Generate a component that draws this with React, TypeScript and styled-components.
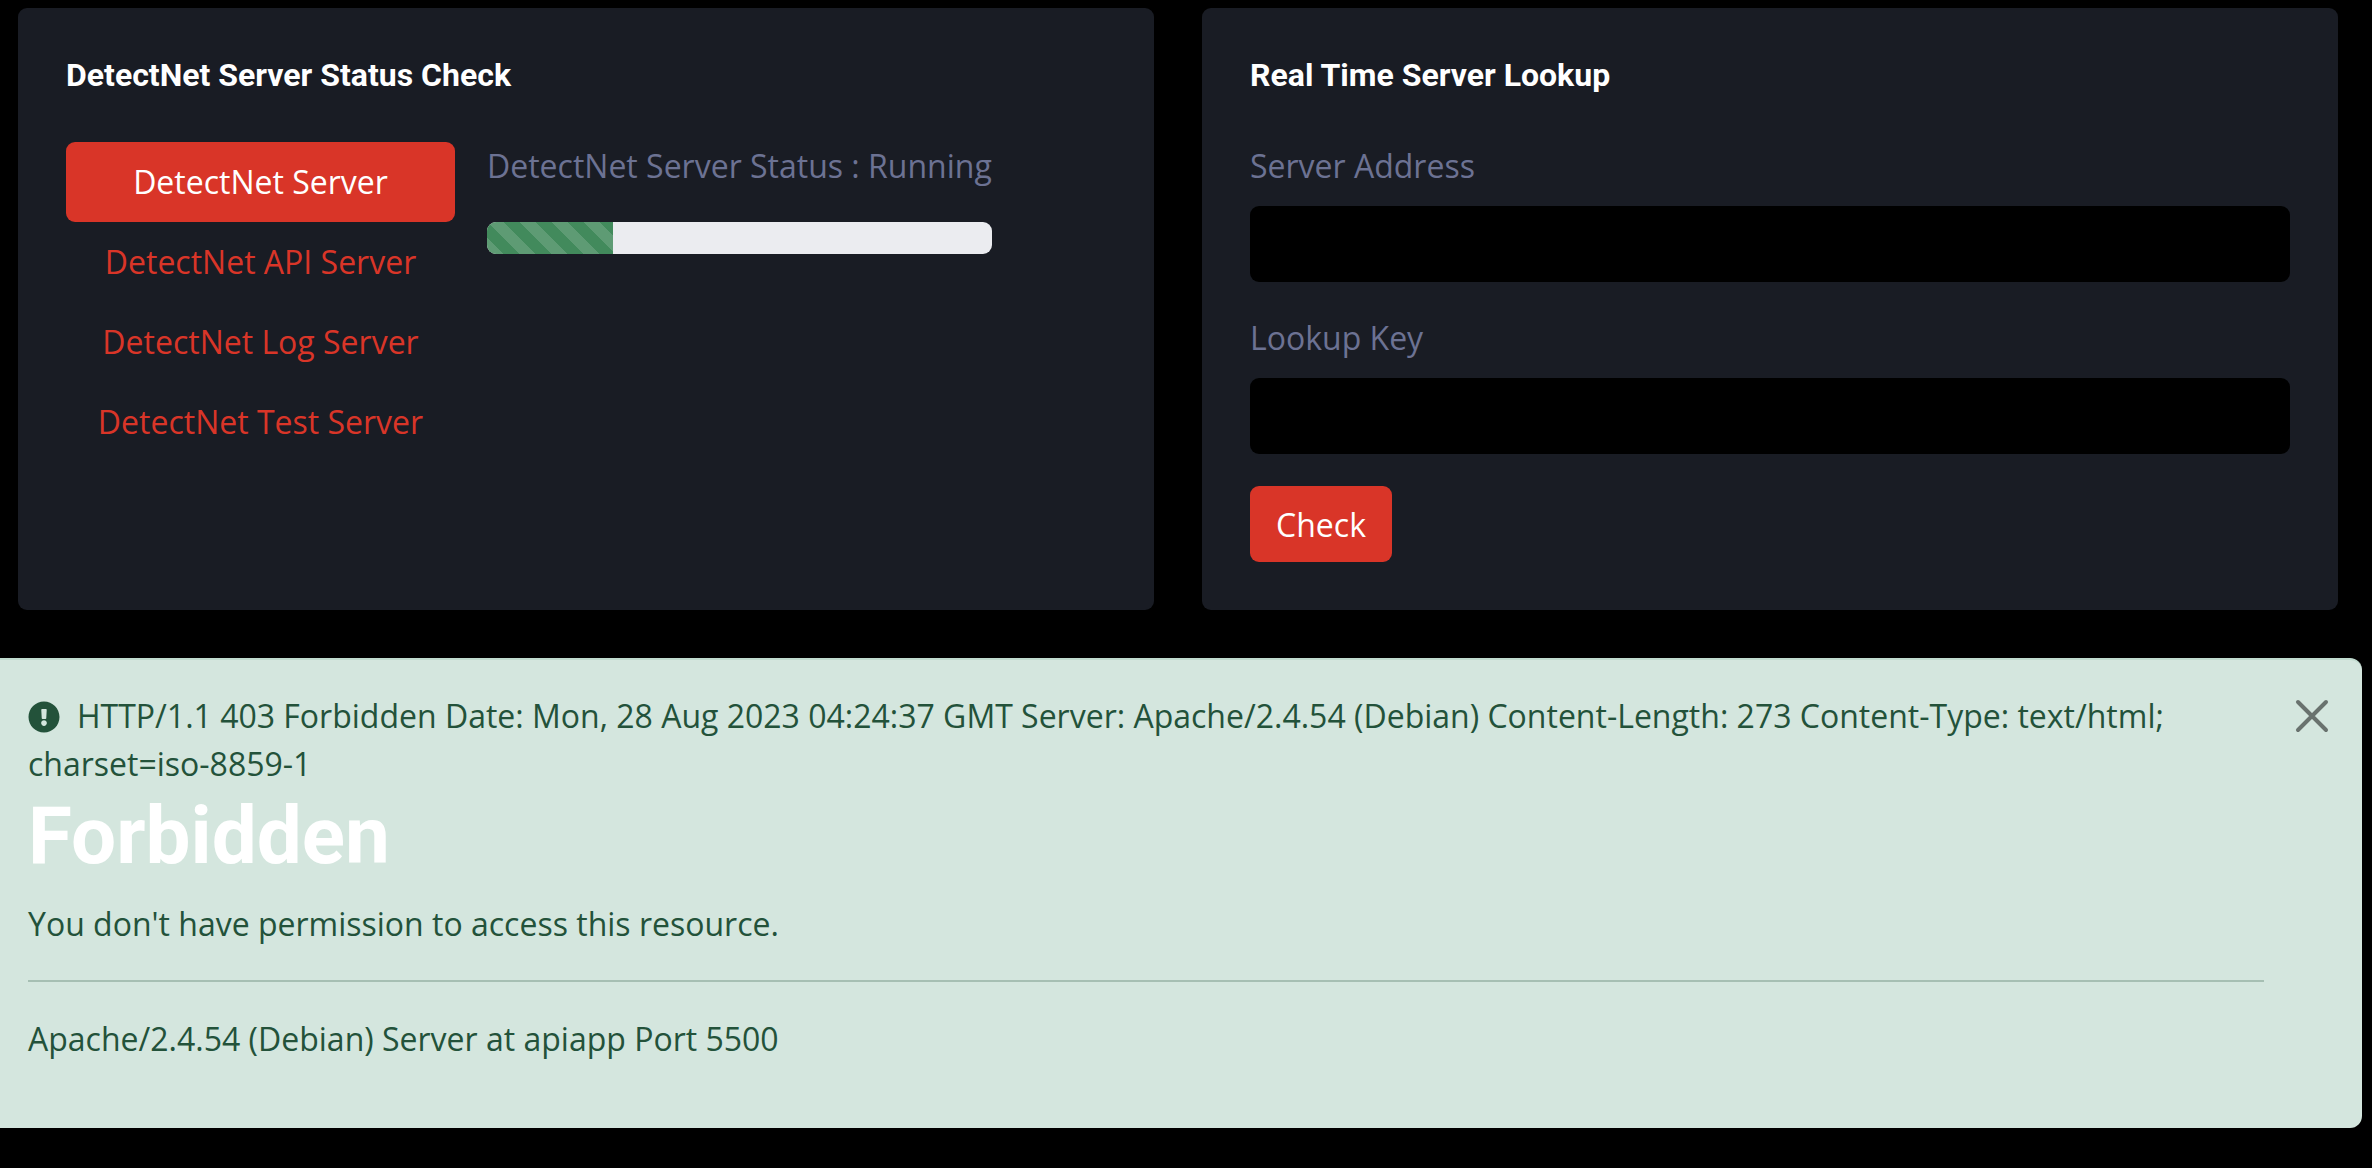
import React from "react";
import styled, { createGlobalStyle } from "styled-components";

const Global = createGlobalStyle`
  html, body { margin: 0; padding: 0; background: #000; }
  body { font-family: "Open Sans", "Liberation Sans", sans-serif; font-size: 32px; }
  * { box-sizing: border-box; }
`;

const Page = styled.div`
  width: 2372px;
  height: 1168px;
  background: #000;
  padding-top: 8px;
  overflow: hidden;
`;

const Cards = styled.div`
  display: grid;
  grid-template-columns: 1136px 1136px;
  gap: 48px;
  padding-left: 18px;
`;

const Card = styled.section`
  height: 602px;
  background: #191c24;
  border-radius: 9px;
  padding: 48px;
`;

const CardTitle = styled.h4`
  margin: 0 0 48px;
  font-family: Roboto, "Liberation Sans", sans-serif;
  font-weight: 700;
  font-size: 32px;
  line-height: 38px;
  color: #fff;
`;

const StatusBody = styled.div`
  display: flex;
  gap: 32px;
`;

const Tabs = styled.nav`
  width: 389px;
  flex: none;
  display: flex;
  flex-direction: column;
`;

const Tab = styled.button<{ $active?: boolean }>`
  height: 80px;
  border: 0;
  border-radius: 9px;
  padding: 0;
  font: inherit;
  line-height: 80px;
  text-align: center;
  color: ${(p) => (p.$active ? "#fff" : "#d93528")};
  background: ${(p) => (p.$active ? "#d93528" : "transparent")};
`;

const StatusPane = styled.div`
  width: 505px;
`;

const Muted = styled.div`
  color: #6c7293;
  font-size: 32px;
  line-height: 48px;
`;

const StatusText = styled(Muted)`
  margin-bottom: 32px;
`;

const Progress = styled.div`
  height: 32px;
  background: #ebecf0;
  border-radius: 9px;
  overflow: hidden;
`;

const ProgressFill = styled.div`
  height: 100%;
  background-color: #428a5c;
  background-image: linear-gradient(
    45deg,
    rgba(255, 255, 255, 0.15) 25%,
    transparent 25%,
    transparent 50%,
    rgba(255, 255, 255, 0.15) 50%,
    rgba(255, 255, 255, 0.15) 75%,
    transparent 75%,
    transparent
  );
  background-size: 32px 32px;
`;

const Field = styled.div`
  margin-bottom: 32px;
`;

const FieldLabel = styled(Muted)`
  margin-bottom: 16px;
`;

const Input = styled.input`
  display: block;
  width: 100%;
  height: 76px;
  background: #000;
  border: 0;
  border-radius: 9px;
  outline: 0;
  color: #fff;
`;

const CheckButton = styled.button`
  display: block;
  width: 142px;
  height: 76px;
  background: #d93528;
  color: #fff;
  border: 0;
  border-radius: 9px;
  font: inherit;
  padding: 0;
`;

const Alert = styled.div`
  position: relative;
  width: 2362px;
  height: 470px;
  margin-top: 48px;
  padding: 32px 28px 0;
  background: #d4e6de;
  border-top: 2px solid #c0dbcf;
  border-radius: 0 12px 12px 0;
  color: #23523a;
  font-size: 32px;
  line-height: 48px;
`;

const Headline = styled.div`
  padding-right: 100px;
`;

const AlertIcon = styled.svg`
  width: 32px;
  height: 32px;
  margin-right: 17px;
  vertical-align: -5px;
`;

const Close = styled.button`
  position: absolute;
  top: 38px;
  right: 32px;
  width: 36px;
  height: 36px;
  padding: 0;
  border: 0;
  background: none;
  opacity: 0.5;
`;

const Forbidden = styled.h1`
  margin: 0;
  font-family: Roboto, "Liberation Sans", sans-serif;
  font-weight: 700;
  font-size: 80px;
  line-height: 96px;
  color: #fff;
`;

const Para = styled.p`
  margin: 16px 0 0;
`;

const Rule = styled.hr`
  width: 2236px;
  margin: 32px 0 0;
  border: 0;
  border-top: 2px solid #a6bfb3;
`;

const Address = styled.address`
  margin-top: 33px;
  font-style: normal;
`;

export default function App() {
  return (
    <Page>
      <Global />
      <Cards>
        <Card>
          <CardTitle>DetectNet Server Status Check</CardTitle>
          <StatusBody>
            <Tabs>
              <Tab $active>DetectNet Server</Tab>
              <Tab>DetectNet API Server</Tab>
              <Tab>DetectNet Log Server</Tab>
              <Tab>DetectNet Test Server</Tab>
            </Tabs>
            <StatusPane>
              <StatusText>DetectNet Server Status : Running</StatusText>
              <Progress>
                <ProgressFill style={{ width: "25%" }} />
              </Progress>
            </StatusPane>
          </StatusBody>
        </Card>
        <Card>
          <CardTitle>Real Time Server Lookup</CardTitle>
          <Field>
            <FieldLabel>Server Address</FieldLabel>
            <Input />
          </Field>
          <Field>
            <FieldLabel>Lookup Key</FieldLabel>
            <Input />
          </Field>
          <CheckButton>Check</CheckButton>
        </Card>
      </Cards>
      <Alert>
        <Headline>
          <AlertIcon viewBox="0 0 512 512">
            <path
              fill="#23523a"
              d="M504 256c0 136.997-111.043 248-248 248S8 392.997 8 256C8 119.083 119.043 8 256 8s248 111.083 248 248zm-248 50c-25.405 0-46 20.595-46 46s20.595 46 46 46 46-20.595 46-46-20.595-46-46-46zm-43.673-165.346l7.418 136c.347 6.364 5.609 11.346 11.982 11.346h48.546c6.373 0 11.635-4.982 11.982-11.346l7.418-136c.375-6.874-5.098-12.654-11.982-12.654h-63.383c-6.884 0-12.356 5.78-11.981 12.654z"
            />
          </AlertIcon>
          HTTP/1.1 403 Forbidden Date: Mon, 28 Aug 2023 04:24:37 GMT Server: Apache/2.4.54 (Debian) Content-Length: 273 Content-Type: text/html; charset=iso-8859-1
        </Headline>
        <Close aria-label="Close">
          <svg viewBox="0 0 36 36" width="36" height="36">
            <path d="M4 4 L32 32 M32 4 L4 32" stroke="#000" strokeWidth="4" strokeLinecap="round" />
          </svg>
        </Close>
        <Forbidden>Forbidden</Forbidden>
        <Para>You don't have permission to access this resource.</Para>
        <Rule />
        <Address>Apache/2.4.54 (Debian) Server at apiapp Port 5500</Address>
      </Alert>
    </Page>
  );
}
